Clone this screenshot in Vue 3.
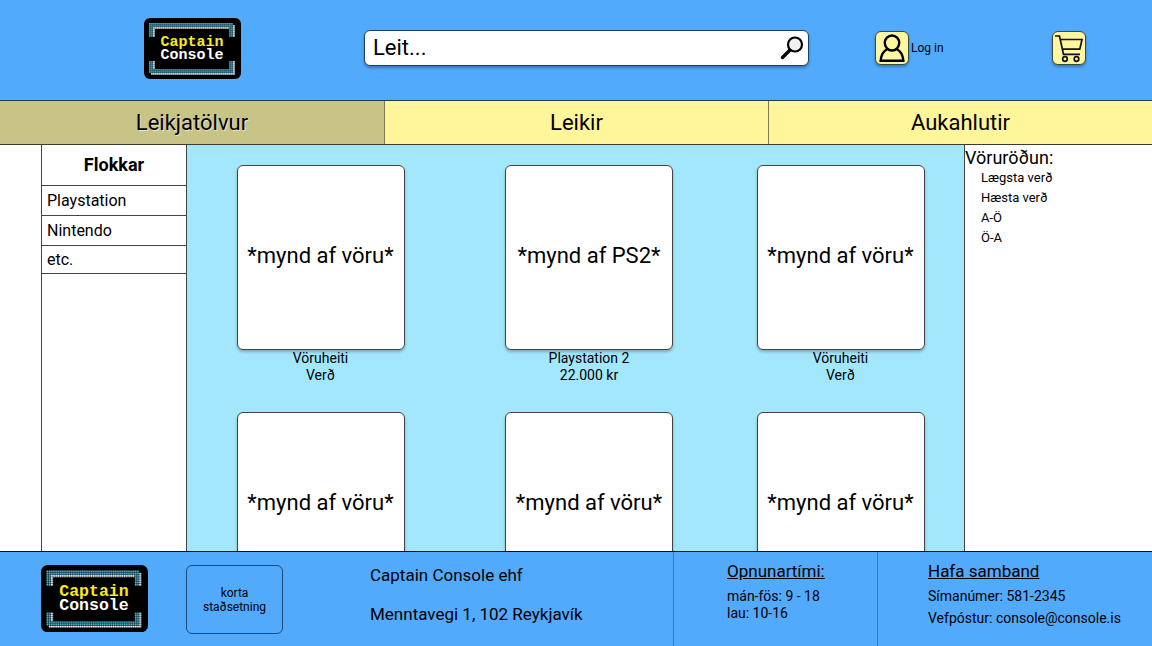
<script setup>
import { h, ref } from 'vue'

const tabs = ['Leikjatölvur', 'Leikir', 'Aukahlutir']
const activeTab = ref('Leikjatölvur')
const query = ref('')
const categories = ['Playstation', 'Nintendo', 'etc.']
const sortings = ['Lægsta verð', 'Hæsta verð', 'A-Ö', 'Ö-A']
const products = [
  { image: '*mynd af vöru*', name: 'Vöruheiti', price: 'Verð' },
  { image: '*mynd af PS2*', name: 'Playstation 2', price: '22.000 kr' },
  { image: '*mynd af vöru*', name: 'Vöruheiti', price: 'Verð' },
  { image: '*mynd af vöru*' },
  { image: '*mynd af vöru*' },
  { image: '*mynd af vöru*' },
]

const teal = 'M5 5H89V9H5ZM5 9H9V19H5ZM85 9H89V19H85ZM5 43H9V55H5ZM85 43H89V55H85ZM9 51H85V55H9Z'
const white = 'M9 9H85V11H9ZM9 11H11V19H9ZM89 7H91V19H89ZM9 43H11V51H9ZM89 43H91V57H89ZM7 55H89V57H7Z'
const grid =
  Array.from({ length: 43 }, (_, i) => `M${6.8 + i * 2} 4V58`).join('') +
  Array.from({ length: 26 }, (_, i) => `M4 ${6.8 + i * 2}H92`).join('')
const text = (y, fill, label) =>
  h('text', { x: 48, y, fill, 'text-anchor': 'middle', 'font-family': "'Liberation Mono', monospace", 'font-weight': 700, 'font-size': 15 }, label)
const Logo = () =>
  h('svg', { viewBox: '0 0 97 61', role: 'img', 'aria-label': 'Captain Console' }, [
    h('rect', { width: 97, height: 61, rx: 6, fill: '#000' }),
    h('path', { d: teal, fill: '#46b4d4' }),
    h('path', { d: white, fill: '#fff' }),
    h('path', { d: grid, stroke: '#000', 'stroke-width': 0.4 }),
    text(28, '#f8ea1c', 'Captain'),
    text(41, '#fff', 'Console'),
  ])
</script>

<template>
  <div class="shell">
    <header class="top">
      <a class="brand" href="#"><Logo class="logo" /></a>
      <form class="search" role="search" @submit.prevent>
        <input v-model="query" type="search" aria-label="Leit" placeholder="Leit..." />
        <button type="submit" aria-label="Leita">
          <svg viewBox="0 0 24 24" width="24" height="24">
            <path d="M2.5 21.5 10 14" fill="none" stroke="#000" stroke-width="3.4" stroke-linecap="round" />
            <circle cx="15" cy="8.500" r="7" fill="#f0f0f0" stroke="#000" stroke-width="2.200" />
          </svg>
        </button>
      </form>
      <a class="login" href="#">
        <span class="tile">
          <svg viewBox="0 0 32 32" width="32" height="32" fill="none" stroke="#000" stroke-width="2.400">
            <ellipse cx="16" cy="11" rx="7.200" ry="7.500" />
            <path d="M11.500 17C7.500 19 5 23 4.600 28.800H27.400C27 23 24.500 19 20.500 17" />
          </svg>
        </span>
        Log in
      </a>
      <a class="cart tile" href="#" aria-label="Karfa">
        <svg viewBox="0 0 32 32" width="32" height="32" fill="none" stroke="#111" stroke-width="1.700">
          <path d="M2 4H6.500L10.500 22.300H27M7.200 7.500H29L26.800 17.200H9.300" />
          <circle cx="12" cy="27" r="2.300" /><circle cx="23.500" cy="27" r="2.300" />
        </svg>
      </a>
    </header>

    <nav class="tabs">
      <a v-for="tab in tabs" :key="tab" href="#" :class="{ active: tab === activeTab }" @click.prevent="activeTab = tab">{{ tab }}</a>
    </nav>

    <main class="content">
      <aside class="categories">
        <h2>Flokkar</h2>
        <a v-for="c in categories" :key="c" href="#">{{ c }}</a>
      </aside>
      <section class="products">
        <article v-for="(p, i) in products" :key="i">
          <div class="picture">{{ p.image }}</div>
          <p v-if="p.name">{{ p.name }}</p>
          <p v-if="p.price">{{ p.price }}</p>
        </article>
      </section>
      <aside class="sorting">
        <h2>Vöruröðun:</h2>
        <a v-for="s in sortings" :key="s" href="#">{{ s }}</a>
      </aside>
    </main>

    <footer class="bottom">
      <div class="company">
        <Logo class="logo" />
        <div class="map">korta<br />staðsetning</div>
        <address>
          <p>Captain Console ehf</p>
          <p>Menntavegi 1, 102 Reykjavík</p>
        </address>
      </div>
      <div class="hours">
        <h2>Opnunartími:</h2>
        <p>mán-fös: 9 - 18</p>
        <p>lau: 10-16</p>
      </div>
      <div class="contact">
        <h2>Hafa samband</h2>
        <p>Símanúmer: 581-2345</p>
        <p>Vefpóstur: console@console.is</p>
      </div>
    </footer>
  </div>
</template>

<style>
body { margin: 0; }
</style>

<style scoped>
.shell {
  display: flex;
  flex-direction: column;
  height: 100vh;
  background: #fff;
  color: #000;
  font-family: Roboto, sans-serif;
}
* { box-sizing: border-box; }
h2, p { margin: 0; font-weight: 400; }
a { color: inherit; text-decoration: none; }
svg { display: block; flex: none; }

.top {
  display: grid;
  grid-template-columns: 364fr 511fr 177fr 100fr;
  align-items: center;
  height: 100px;
  padding-bottom: 4px;
  background: #52aafc;
}
.brand { justify-self: center; padding-left: 20px; }
.brand .logo { width: 97px; }
.search {
  display: flex;
  align-items: center;
  height: 36px;
  margin-right: 66px;
  padding: 0 4px 0 8px;
  border: 1px solid #1d4468;
  border-radius: 6px;
  background: #fff;
  box-shadow: 0 2px 3px rgba(0, 0, 0, 0.3);
}
.search input {
  flex: 1;
  min-width: 0;
  padding: 0;
  border: 0;
  outline: 0;
  background: none;
  font: 22px/28px Roboto, sans-serif;
}
.search input::placeholder { color: #000; opacity: 1; }
.search button { padding: 0; border: 0; background: none; }
.tile {
  display: grid;
  place-items: center;
  width: 34px;
  height: 34px;
  border: 1px solid #3c4a3c;
  border-radius: 6px;
  background: #fff7a0;
  box-shadow: 0 2px 3px rgba(0, 0, 0, 0.3);
}
.login { display: flex; align-items: center; gap: 2px; font-size: 12px; }

.tabs {
  display: grid;
  grid-template-columns: repeat(3, 1fr);
  height: 45px;
  border-top: 1px solid #2b3b3b;
  border-bottom: 1px solid #3c3c2c;
}
.tabs a {
  display: grid;
  place-items: center;
  background: #fff59b;
  font-size: 22px;
}
.tabs a + a { border-left: 1px solid #7d7950; }
.tabs a.active { background: #c8c387; text-shadow: 1px 1px 1px rgba(255, 255, 255, 0.6); }

.content {
  display: grid;
  grid-template-columns: 146px 1fr 187px;
  flex: 1;
  min-height: 0;
  padding-left: 41px;
  overflow: hidden;
}
.categories { border: solid #444; border-width: 0 1px; font-size: 16px; }
.categories h2 {
  border-bottom: 1px solid #444;
  font-size: 18px;
  font-weight: 700;
  line-height: 40px;
  text-align: center;
}
.categories a {
  display: block;
  padding-left: 5px;
  border-bottom: 1px solid #444;
  line-height: 29px;
}
.categories a:last-child { line-height: 27px; }
.products {
  display: grid;
  grid-template-columns: 267fr 270fr 233fr;
  align-content: start;
  row-gap: 28px;
  padding: 20px 7px 0 0;
  border-right: 1px solid #444;
  background: #a3e7fd;
}
.products article { display: grid; justify-items: center; font-size: 14px; line-height: 17px; }
.picture {
  display: grid;
  place-items: center;
  width: 168px;
  height: 185px;
  padding-bottom: 3px;
  border: 1px solid #444;
  border-radius: 6px;
  background: #fff;
  box-shadow: 0 2px 3px rgba(0, 0, 0, 0.25);
  font-size: 22px;
  line-height: 26px;
}
.sorting { padding-top: 3px; font-size: 13px; line-height: 20px; }
.sorting h2 { font-size: 18px; }
.sorting a { display: block; padding-left: 16px; }

.bottom {
  display: grid;
  grid-template-columns: 673fr 204fr 275fr;
  height: 95px;
  border-top: 1px solid #111;
  background: #52aafc;
  font-size: 14px;
}
.company { display: flex; align-items: flex-start; padding: 13px 0 0 41px; }
.company .logo { width: 107px; }
.map {
  display: grid;
  align-content: center;
  width: 97px;
  height: 69px;
  margin: 0 87px 0 38px;
  border: 1px solid #1d4a78;
  border-radius: 6px;
  font-size: 12px;
  line-height: 14px;
  text-align: center;
}
address { font-size: 17px; font-style: normal; line-height: 20px; }
address p + p { margin-top: 19px; }
.hours, .contact { padding: 9px 0 0 50px; border-left: 1px solid #3c7ab5; }
.bottom h2 { font-size: 17px; line-height: 20px; text-decoration: underline; }
.hours { padding-left: 53px; line-height: 17px; }
.hours h2 { margin-bottom: 7px; }
.contact { line-height: 22px; }
.contact h2 { margin-bottom: 4px; }
</style>
